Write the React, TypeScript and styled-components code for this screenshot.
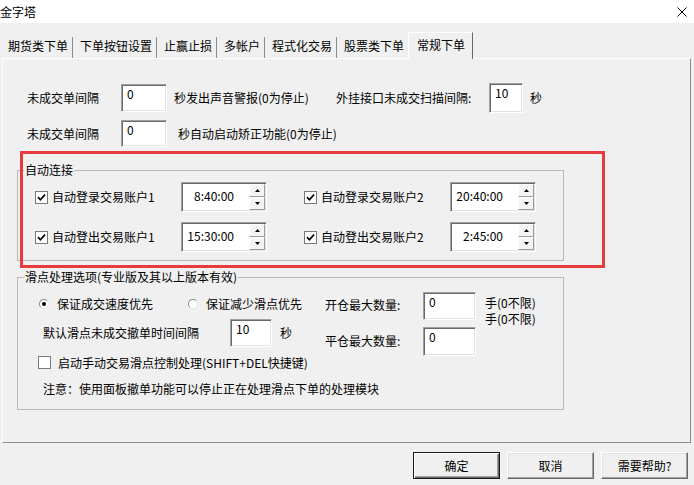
import React from "react";
import styled, { createGlobalStyle } from "styled-components";

const GlobalStyle = createGlobalStyle`
  html, body {
    margin: 0;
    padding: 0;
    background: #f0f0f0;
  }
  body {
    font-family: "Noto Sans CJK SC", "Microsoft YaHei", "Liberation Sans", sans-serif;
    font-size: 12px;
    line-height: 16px;
    color: #000;
  }
  * {
    box-sizing: border-box;
  }
`;

const TABS = ["期货类下单", "下单按钮设置", "止赢止损", "多帐户", "程式化交易", "股票类下单", "常规下单"];

function CloseIcon() {
  return (
    <svg width="10" height="10" viewBox="0 0 10 10">
      <path d="M0.5 0.5L9.5 9.5M9.5 0.5L0.5 9.5" stroke="#000" strokeWidth="1" />
    </svg>
  );
}

function CheckBox({ checked }: { checked?: boolean }) {
  return (
    <Box>
      {checked && (
        <svg width="9" height="9" viewBox="0 0 9 9">
          <path d="M1 4.2L3.4 6.8L8 1.6" stroke="#000" strokeWidth="1.7" fill="none" />
        </svg>
      )}
    </Box>
  );
}

function Spin({ value }: { value: string }) {
  return (
    <SpinBox>
      <SpinValue>{value}</SpinValue>
      <Spinner>
        <SpinButton>
          <svg width="5" height="3" viewBox="0 0 5 3">
            <path d="M0 3L2.5 0L5 3Z" fill="#000" />
          </svg>
        </SpinButton>
        <SpinButton>
          <svg width="5" height="3" viewBox="0 0 5 3">
            <path d="M0 0L2.5 3L5 0Z" fill="#000" />
          </svg>
        </SpinButton>
      </Spinner>
    </SpinBox>
  );
}

export default function App(): React.ReactElement {
  return (
    <Window>
      <GlobalStyle />
      <TitleBar>
        <Title>金字塔</Title>
        <CloseIcon />
      </TitleBar>

      <TabStrip>
        {TABS.map((t, i) => (
          <Tab key={t} $active={i === TABS.length - 1}>
            {t}
          </Tab>
        ))}
      </TabStrip>

      <Panel>
        <Row $h={30}>
          <Label $w={94}>未成交单间隔</Label>
          <Input $w={46} $h={28}>0</Input>
          <Label $w={162} $ml={7}>秒发出声音警报(0为停止)</Label>
          <Label $w={153}>外挂接口未成交扫描间隔:</Label>
          <Input $w={34} $h={30}>10</Input>
          <Label $ml={7}>秒</Label>
        </Row>
        <Row $h={27} $mt={7}>
          <Label $w={94}>未成交单间隔</Label>
          <Input $w={46} $h={27}>0</Input>
          <Label $ml={11}>秒自动启动矫正功能(0为停止)</Label>
        </Row>

        <Group $mt={15}>
          <Legend>自动连接</Legend>
          <ConnectBody>
            <ConnectRow>
              <CheckLabel>
                <CheckBox checked />
                自动登录交易账户1
              </CheckLabel>
              <Spin value="8:40:00" />
              <CheckLabel $ml={37}>
                <CheckBox checked />
                自动登录交易账户2
              </CheckLabel>
              <Spin value="20:40:00" />
            </ConnectRow>
            <ConnectRow>
              <CheckLabel>
                <CheckBox checked />
                自动登出交易账户1
              </CheckLabel>
              <Spin value="15:30:00" />
              <CheckLabel $ml={37}>
                <CheckBox checked />
                自动登出交易账户2
              </CheckLabel>
              <Spin value="2:45:00" />
            </ConnectRow>
          </ConnectBody>
        </Group>

        <Group $mt={8}>
          <Legend>滑点处理选项(专业版及其以上版本有效)</Legend>
          <SlipBody>
            <SlipTop>
              <LeftCol>
                <RadioRow>
                  <RadioLabel>
                    <Radio $checked />
                    保证成交速度优先
                  </RadioLabel>
                  <RadioLabel $ml={35}>
                    <Radio />
                    保证减少滑点优先
                  </RadioLabel>
                </RadioRow>
                <Row $h={28} $mt={3} $pl={25}>
                  <Label $w={187}>默认滑点未成交撤单时间间隔</Label>
                  <Input $w={42} $h={28}>10</Input>
                  <Label $ml={8}>秒</Label>
                </Row>
              </LeftCol>
              <RightCol>
                <QtyRow $h={28}>
                  <QtyLabel $h={28}>开仓最大数量:</QtyLabel>
                  <Input $w={53} $h={28}>0</Input>
                  <HandNote>
                    <span>手(0不限)</span>
                    <span>手(0不限)</span>
                  </HandNote>
                </QtyRow>
                <QtyRow $h={29} $mt={7}>
                  <QtyLabel $h={29}>平仓最大数量:</QtyLabel>
                  <Input $w={53} $h={29}>0</Input>
                </QtyRow>
              </RightCol>
            </SlipTop>
            <ManualRow>
              <CheckBox />
              启动手动交易滑点控制处理(SHIFT+DEL快捷键)
            </ManualRow>
            <Note>注意：使用面板撤单功能可以停止正在处理滑点下单的处理模块</Note>
          </SlipBody>
        </Group>
      </Panel>

      <ButtonBar>
        <Button $default>确定</Button>
        <Button>取消</Button>
        <Button>需要帮助?</Button>
      </ButtonBar>

      <Highlight />
    </Window>
  );
}

// Styled Components
const Window = styled.div`
  position: relative;
  width: 694px;
  height: 485px;
  display: flex;
  flex-direction: column;
  background: #f0f0f0;
  overflow: hidden;
`;

const TitleBar = styled.div`
  flex: none;
  height: 23px;
  padding-right: 7px;
  display: flex;
  align-items: center;
  justify-content: space-between;
  background: #fff;
`;

const Title = styled.span`
  margin-left: 0;
`;

const TabStrip = styled.div`
  flex: none;
  height: 35px;
  padding-left: 1px;
  display: flex;
  align-items: flex-end;
`;

const Tab = styled.div<{ $active?: boolean }>`
  position: relative;
  z-index: ${(p) => (p.$active ? 1 : 0)};
  height: ${(p) => (p.$active ? 27 : 21)}px;
  margin-bottom: ${(p) => (p.$active ? -1 : 0)}px;
  margin-left: ${(p) => (p.$active ? -1 : 0)}px;
  padding: ${(p) => (p.$active ? "4px 7px 0 8px" : "1px 4px 0 7px")};
  white-space: nowrap;
  background: #f0f0f0;
  border-left: ${(p) => (p.$active ? "1px solid #fff" : "none")};
  border-top: ${(p) => (p.$active ? "1px solid #fff" : "none")};
  border-right: 1px solid ${(p) => (p.$active ? "#696969" : "#8c8c8c")};
`;

const Panel = styled.div`
  flex: none;
  height: 385px;
  margin: 0 3px 0 2px;
  padding: 24px 0 0 14px;
  border-top: 1px solid #fff;
  border-left: 1px solid #fff;
  border-right: 1px solid #8c8c8c;
  border-bottom: 1px solid #8c8c8c;
`;

const Row = styled.div<{ $h: number; $mt?: number; $pl?: number }>`
  height: ${(p) => p.$h}px;
  margin-top: ${(p) => p.$mt ?? 0}px;
  padding-left: ${(p) => p.$pl ?? 10}px;
  display: flex;
  align-items: center;
  white-space: nowrap;
`;

const Label = styled.span<{ $w?: number; $ml?: number }>`
  flex: none;
  width: ${(p) => (p.$w ? `${p.$w}px` : "auto")};
  margin-left: ${(p) => p.$ml ?? 0}px;
`;

const Input = styled.div<{ $w: number; $h: number }>`
  flex: none;
  width: ${(p) => p.$w}px;
  height: ${(p) => p.$h}px;
  padding: 1px 5px;
  background: #fff;
  border-top: 1px solid #a0a0a0;
  border-left: 1px solid #a0a0a0;
  border-right: 1px solid #fff;
  border-bottom: 1px solid #fff;
  box-shadow: inset 1px 1px 0 #696969, inset -1px -1px 0 #e3e3e3;
`;

const Group = styled.fieldset<{ $mt: number }>`
  width: 547px;
  margin: ${(p) => p.$mt}px 0 0 0;
  padding: 0;
  min-width: 0;
  border: 1px solid #b9b9b9;
`;

const Legend = styled.legend`
  margin-left: 6px;
  padding: 0 1px;
  line-height: 16px;
`;

const ConnectBody = styled.div`
  padding: 4px 0 8px 17px;
  display: flex;
  flex-direction: column;
  gap: 10px;
`;

const ConnectRow = styled.div`
  height: 30px;
  display: flex;
  align-items: center;
`;

const CheckLabel = styled.label<{ $ml?: number }>`
  flex: none;
  width: 146px;
  margin-left: ${(p) => p.$ml ?? 0}px;
  display: flex;
  align-items: center;
  gap: 4px;
  white-space: nowrap;
`;

const Box = styled.span`
  flex: none;
  width: 13px;
  height: 13px;
  display: flex;
  align-items: center;
  justify-content: center;
  background: #fff;
  border: 1px solid #7a7a7a;
`;

const SpinBox = styled.div`
  flex: none;
  width: 86px;
  height: 30px;
  display: flex;
  background: #fff;
  border-top: 1px solid #a0a0a0;
  border-left: 1px solid #a0a0a0;
  border-right: 1px solid #fff;
  border-bottom: 1px solid #fff;
  box-shadow: inset 1px 1px 0 #696969, inset -1px -1px 0 #e3e3e3;
  padding: 1px 1px 1px 1px;
`;

const SpinValue = styled.div`
  flex: 1;
  padding: 0 15px 2px 0;
  display: flex;
  align-items: center;
  justify-content: flex-end;
`;

const Spinner = styled.div`
  flex: none;
  width: 16px;
  display: flex;
  flex-direction: column;
`;

const SpinButton = styled.div`
  flex: 1;
  display: flex;
  align-items: center;
  justify-content: center;
  background: #f4f4f4;
  border-top: 1px solid #fff;
  border-left: 1px solid #fff;
  border-right: 1px solid #9a9a9a;
  border-bottom: 1px solid #9a9a9a;
`;

const SlipBody = styled.div`
  padding: 7px 0 12px 0;
`;

const SlipTop = styled.div`
  display: flex;
`;

const LeftCol = styled.div`
  flex: none;
  width: 307px;
  display: flex;
  flex-direction: column;
`;

const RadioRow = styled.div`
  height: 24px;
  padding-left: 21px;
  display: flex;
  align-items: center;
  white-space: nowrap;
`;

const RadioLabel = styled.label<{ $ml?: number }>`
  margin-left: ${(p) => p.$ml ?? 0}px;
  display: flex;
  align-items: center;
  gap: 8px;
`;

const Radio = styled.span<{ $checked?: boolean }>`
  flex: none;
  width: 10px;
  height: 10px;
  display: flex;
  align-items: center;
  justify-content: center;
  border-radius: 50%;
  background: #fff;
  border: 1px solid;
  border-color: #8a8a8a #e3e3e3 #e3e3e3 #8a8a8a;

  &::after {
    content: "";
    width: 4px;
    height: 4px;
    border-radius: 50%;
    background: ${(p) => (p.$checked ? "#000" : "transparent")};
  }
`;

const RightCol = styled.div`
  flex: none;
  display: flex;
  flex-direction: column;
`;

const QtyRow = styled.div<{ $h: number; $mt?: number }>`
  height: ${(p) => p.$h}px;
  margin-top: ${(p) => p.$mt ?? 0}px;
  display: flex;
  align-items: flex-start;
  white-space: nowrap;
`;

const QtyLabel = styled.span<{ $h: number }>`
  width: 98px;
  line-height: ${(p) => p.$h - 2}px;
`;

const HandNote = styled.div`
  margin-left: 9px;
  padding-top: 3px;
  display: flex;
  flex-direction: column;
`;

const ManualRow = styled.label`
  height: 13px;
  padding-left: 20px;
  display: flex;
  align-items: center;
  gap: 7px;
  white-space: nowrap;
`;

const Note = styled.div`
  margin-top: 12px;
  padding-left: 25px;
  white-space: nowrap;
`;

const ButtonBar = styled.div`
  flex: none;
  margin-top: 9px;
  padding-right: 6px;
  display: flex;
  justify-content: flex-end;
  gap: 7px;
`;

const Button = styled.div<{ $default?: boolean }>`
  width: 87px;
  height: 27px;
  display: flex;
  align-items: center;
  justify-content: center;
  background: #f0f0f0;
  border: 1px solid;
  border-color: ${(p) => (p.$default ? "#1a1a1a" : "#fff #696969 #696969 #fff")};
  box-shadow: ${(p) =>
    p.$default
      ? "inset 1px 1px 0 #fff, inset -1px -1px 0 #696969, inset -2px -2px 0 #a0a0a0"
      : "inset -1px -1px 0 #a0a0a0, inset 1px 1px 0 #e3e3e3"};
`;

const Highlight = styled.div`
  position: absolute;
  left: 20px;
  top: 151px;
  width: 585px;
  height: 117px;
  border: 3px solid #e63b3f;
  pointer-events: none;
`;
